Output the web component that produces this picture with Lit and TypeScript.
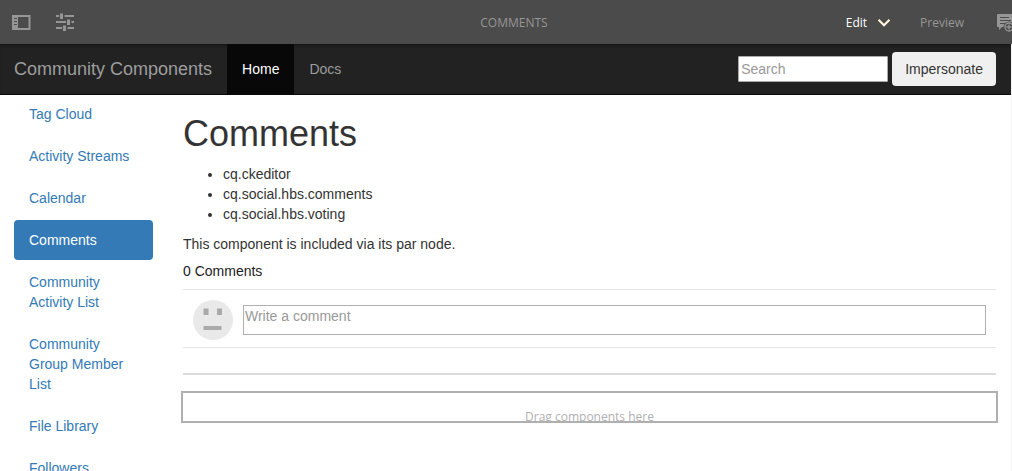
import { LitElement, html, css } from "lit";
import { customElement, state } from "lit/decorators.js";
import { classMap } from "lit/directives/class-map.js";

@customElement("editor-bar")
class EditorBar extends LitElement {
  static styles = css`
    :host {
      display: block;
      background: #4b4b4b;
      color: #969696;
      font: 12px/42px "Open Sans", "Noto Sans", sans-serif;
    }
    .bar {
      display: grid;
      grid-template-columns: 1fr auto 1fr;
      grid-template-rows: 44px;
      overflow: hidden;
    }
    .tools {
      display: flex;
      align-items: center;
      gap: 24px;
      padding-left: 11px;
    }
    .title {
      margin: 0;
      padding: 2px 0 0 16px;
      font: inherit;
    }
    .modes {
      display: flex;
      align-items: center;
      justify-content: flex-end;
    }
    button {
      display: flex;
      align-items: center;
      height: 44px;
      padding: 0;
      border: 0;
      background: none;
      color: inherit;
      font: inherit;
    }
    .mode {
      padding-top: 2px;
    }
    .edit {
      gap: 11px;
      margin-right: 30px;
      color: #fff;
    }
    .preview {
      margin-right: 32px;
    }
    .annotate {
      width: 16px;
      overflow: hidden;
    }
    svg {
      display: block;
      flex: none;
    }
  `;

  render() {
    return html`
      <header class="bar">
        <div class="tools">
          <button aria-label="Toggle side panel">
            <svg width="20" height="20" viewBox="0 0 20 20" fill="#969696">
              <path fill-rule="evenodd" d="M1 3h18.500v15H1zM7 5v11h10.500V5zM3 6v1h3V6zM3 9v1h3V9zM3 12v1h3v-1z" />
            </svg>
          </button>
          <button aria-label="Page properties">
            <svg width="20" height="20" viewBox="0 0 20 20" fill="#969696">
              <path d="M1 3h3v2H1zM5 1.500h3v5.500H5zM9.500 3H19v2H9.500zM1 9h10v2H1zM12 7.500h3v5.500h-3zM16.500 9H19v2h-2.500zM1 15h6v2H1zM8 13.500h3V19H8zM12.500 15H19v2h-6.500z" />
            </svg>
          </button>
        </div>
        <h2 class="title">COMMENTS</h2>
        <div class="modes">
          <button class="mode edit">
            Edit
            <svg width="12" height="8" viewBox="0 0 12 8" fill="none" stroke="#fff4dc" stroke-width="2.200">
              <path d="M.5 .8L6 6.200 11.500.8" />
            </svg>
          </button>
          <button class="mode preview">Preview</button>
          <button class="annotate" aria-label="Annotate">
            <svg width="22" height="20" viewBox="0 0 22 20">
              <path fill="#969696" d="M2 2h15a1 1 0 0 1 1 1v12H6l-3 3v-3H2a1 1 0 0 1-1-1V3a1 1 0 0 1 1-1z" />
              <path stroke="#4b4b4b" d="M4 5.500h9M4 8.500h11M4 11.500h5" />
              <circle cx="13" cy="15" r="5.500" fill="#4b4b4b" />
              <circle cx="13" cy="15" r="4" fill="none" stroke="#969696" stroke-width="1.300" />
              <path stroke="#969696" stroke-width="1.300" d="M10.500 15h5M13 12.500v5" />
            </svg>
          </button>
        </div>
      </header>
    `;
  }
}

@customElement("site-nav")
class SiteNav extends LitElement {
  static styles = css`
    :host {
      display: block;
    }
    .nav {
      display: flex;
      align-items: center;
      height: 50px;
      padding: 0 15px 0 14px;
      background: #222;
      box-shadow: 0 1px 0 #080808, inset 0 3px 3px -2px #111;
      color: #9d9d9d;
    }
    a {
      color: inherit;
      text-decoration: none;
      line-height: 50px;
    }
    .brand {
      margin-right: 15px;
      font-size: 18px;
    }
    .link {
      padding: 0 15px;
    }
    .current {
      background: #080808;
      color: #fff;
    }
    .search {
      display: flex;
      align-items: center;
      gap: 4px;
      margin-left: auto;
    }
    input {
      box-sizing: border-box;
      width: 150px;
      height: 26px;
      padding: 1px 2px;
      border: 1px solid #aaa;
      border-radius: 1px;
      color: #333;
      font: inherit;
    }
    input::placeholder {
      color: #999;
    }
    button {
      height: 34px;
      padding: 0 13px;
      border: 0;
      border-radius: 4px;
      background: #f0f0f0;
      color: #333;
      font: inherit;
    }
  `;

  render() {
    return html`
      <nav class="nav">
        <a class="brand" href="#">Community Components</a>
        <a class="link current" href="#home">Home</a>
        <a class="link" href="#docs">Docs</a>
        <form class="search">
          <input type="text" placeholder="Search" aria-label="Search" />
          <button type="button">Impersonate</button>
        </form>
      </nav>
    `;
  }
}

@customElement("app-root")
class AppRoot extends LitElement {
  static styles = css`
    :host {
      display: block;
      height: 100vh;
      overflow: hidden;
      background: #fff;
      color: #333;
      font: 14px/20px "Liberation Sans", Arial, sans-serif;
    }
    .page {
      min-height: 100%;
      border-right: 1px solid #f2f2f2;
    }
    .columns {
      display: grid;
      grid-template-columns: 168px 1fr;
    }
    .side {
      display: flex;
      flex-direction: column;
      gap: 2px;
      margin: 0;
      padding: 0 15px 0 14px;
      list-style: none;
    }
    .item {
      display: block;
      padding: 10px 15px;
      border-radius: 4px;
      color: #337ab7;
      text-decoration: none;
    }
    .active {
      background: #337ab7;
      color: #fff;
    }
    .main {
      min-width: 0;
      padding: 20px 15px 0;
    }
    h1 {
      margin: 0 0 10px;
      font-size: 36px;
      font-weight: 500;
      line-height: 40px;
    }
    .libs {
      margin: 0 0 10px;
      padding-left: 40px;
    }
    p {
      margin: 0;
    }
    .count {
      margin: 7px 0 8px;
      color: #222;
      font: inherit;
    }
    .composer {
      display: flex;
      align-items: center;
      gap: 10px;
      padding: 10px 10px 7px;
      border: solid #e5e5e5;
      border-width: 1px 0;
    }
    .avatar {
      display: block;
      flex: none;
    }
    textarea {
      box-sizing: border-box;
      flex: 1;
      min-width: 0;
      height: 30px;
      padding: 0 1px;
      border: 1px solid #b0b0b0;
      resize: none;
      overflow: hidden;
      color: #333;
      font: inherit;
    }
    textarea::placeholder {
      color: #999;
    }
    .rule {
      margin: 25px 0 16px;
      border: 0;
      border-top: 2px solid #dcdcdc;
    }
    .drop {
      box-sizing: border-box;
      height: 32px;
      margin: 0 -2px;
      padding-top: 14px;
      border: 2px solid #b0b0b0;
      overflow: hidden;
      color: #b0b0b0;
      font-family: "Open Sans", "Noto Sans", sans-serif;
      font-size: 12px;
      text-align: center;
    }
  `;

  @state() private current = "Comments";

  private guides = [
    "Tag Cloud",
    "Activity Streams",
    "Calendar",
    "Comments",
    "Community Activity List",
    "Community Group Member List",
    "File Library",
    "Followers",
  ];

  private libs = ["cq.ckeditor", "cq.social.hbs.comments", "cq.social.hbs.voting"];

  render() {
    return html`
      <editor-bar></editor-bar>
      <div class="page">
        <site-nav></site-nav>
        <div class="columns">
          <ul class="side">
            ${this.guides.map(
              (name) => html`<li>
                <a
                  class=${classMap({ item: true, active: name === this.current })}
                  href="#"
                  @click=${(e: Event) => {
                    e.preventDefault();
                    this.current = name;
                  }}
                  >${name}</a
                >
              </li>`
            )}
          </ul>
          <main class="main">
            <h1>Comments</h1>
            <ul class="libs">
              ${this.libs.map((lib) => html`<li>${lib}</li>`)}
            </ul>
            <p>This component is included via its par node.</p>
            <h2 class="count">0 Comments</h2>
            <div class="composer">
              <svg class="avatar" width="40" height="40" viewBox="0 0 40 40" aria-hidden="true">
                <circle cx="20" cy="20" r="20" fill="#e9e9e9" />
                <path fill="#aaa" d="M10.500 8.500h5v6.500h-5zM24 8.500h5v6.500h-5zM10.500 26h18v4h-18z" />
              </svg>
              <textarea placeholder="Write a comment" aria-label="Write a comment"></textarea>
            </div>
            <hr class="rule" />
            <div class="drop">Drag components here</div>
          </main>
        </div>
      </div>
    `;
  }
}
